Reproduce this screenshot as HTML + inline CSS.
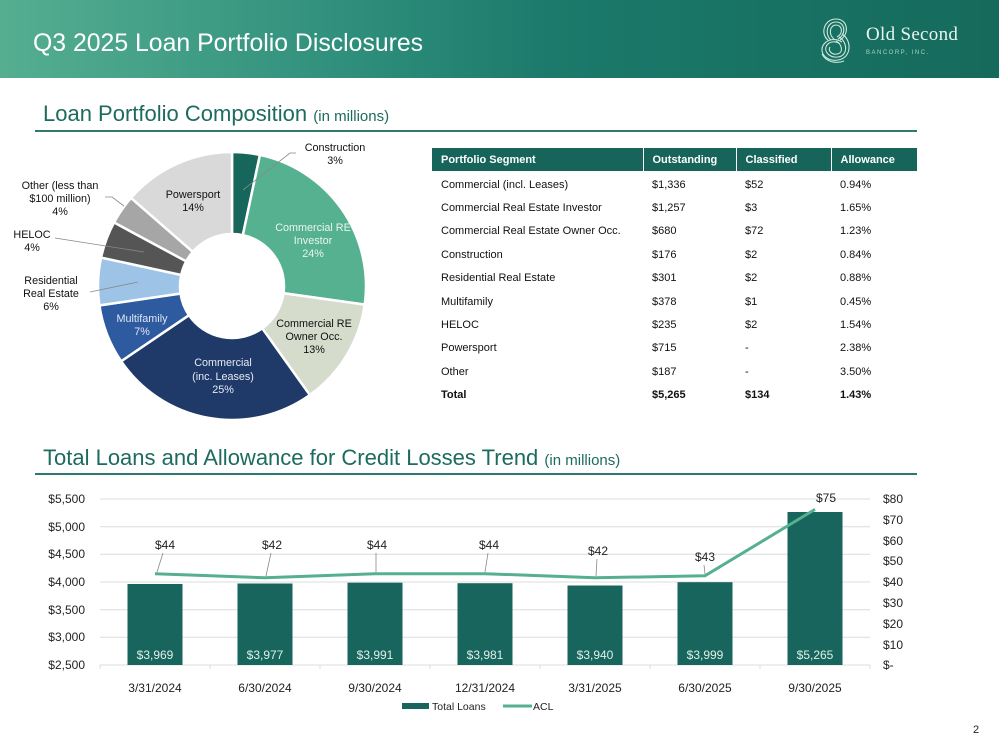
<!DOCTYPE html>
<html><head><meta charset="utf-8"><style>
body{margin:0;width:999px;height:750px;background:#fff;position:relative;overflow:hidden;font-family:"Liberation Sans",Arial,sans-serif}
.hdr{position:absolute;left:0;top:0;width:999px;height:78px;background:linear-gradient(90deg,#55ae90 0%,#2f8f7c 35%,#1b7a6b 55%,#156a5c 100%)}
.hdr h1{position:absolute;left:33px;top:30px;margin:0;font-weight:normal;font-size:24.8px;color:#fff}
.sec{position:absolute;left:43px;font-size:22px;color:#1d6b5e;white-space:nowrap}
.sec small{font-size:15px}
.rule{position:absolute;left:35px;width:882px;height:2px;background:#2f7a70}
table{position:absolute;left:432px;top:148px;width:485px;border-collapse:collapse;font-size:11px;color:#111;table-layout:fixed}
th{background:#17655a;color:#fff;text-align:left;font-weight:bold;height:23px;padding:0 0 0 9px;border-left:1px solid #fff}
th:first-child{border-left:none}
td{height:23.4px;padding:0 0 0 9px}
tr.sp td{height:2px;padding:0}
</style></head><body>
<div class="hdr"><h1>Q3 2025 Loan Portfolio Disclosures</h1>
<svg style="position:absolute;left:812px;top:14px" width="50" height="52" viewBox="0 0 50 52" fill="none" stroke="#cfe8dc" stroke-width="1.1">
<path d="M16 26 C8 20 12 5 24 5 C36 5 38 20 28 26"/>
<path d="M19 26 C12 20 15 8 24 8 C33 8 35 20 26 25"/>
<path d="M22 25 C16 20 18 11 24 11 C30 11 32 19 25 23"/>
<path d="M30 20 C40 26 40 44 26 46 C14 48 6 38 12 30 C16 25 24 24 30 28"/>
<path d="M27 23 C36 28 36 42 26 43 C17 44 11 37 15 31 C18 27 24 27 28 30"/>
<path d="M24 27 C30 30 32 39 25 40 C19 41 16 36 18 33"/>
<path d="M10 40 C14 48 24 50 32 47"/>
</svg>
<div style="position:absolute;left:866px;top:24px;font-family:'Liberation Serif',serif;font-size:19px;color:#e8f4ee;letter-spacing:0.3px">Old Second</div>
<div style="position:absolute;left:866px;top:50px;font-size:6px;color:#a9d3c2;letter-spacing:1.5px">BANCORP, INC.</div>
</div>

<div class="sec" style="top:101px">Loan Portfolio Composition <small>(in millions)</small></div>
<div class="rule" style="top:130px"></div>

<svg id="pie" style="position:absolute;left:0;top:130px" width="420" height="300" viewBox="0 130 420 300" font-size="10.8" text-anchor="middle" fill="#111">
<g id="slices"></g>
<g stroke="#888" stroke-width="0.8" fill="none">
<path d="M243 190 L290 153 L296 153"/><path d="M105 197 L112 197 L124 206"/><path d="M55 238 L144 252"/><path d="M90 292 L138 282"/>
</g>
<text x="335" y="151">Construction</text><text x="335" y="164">3%</text>
<text x="313" y="231" fill="#eaf5ef">Commercial RE</text><text x="313" y="244" fill="#eaf5ef">Investor</text><text x="313" y="257" fill="#eaf5ef">24%</text>
<text x="314" y="327">Commercial RE</text><text x="314" y="340">Owner Occ.</text><text x="314" y="353">13%</text>
<text x="223" y="366" fill="#e6ebf5">Commercial</text><text x="223" y="380" fill="#e6ebf5">(inc. Leases)</text><text x="223" y="393" fill="#e6ebf5">25%</text>
<text x="142" y="322" fill="#dde6f5">Multifamily</text><text x="142" y="335" fill="#dde6f5">7%</text>
<text x="51" y="284">Residential</text><text x="51" y="297">Real Estate</text><text x="51" y="310">6%</text>
<text x="32" y="238">HELOC</text><text x="32" y="251">4%</text>
<text x="60" y="189">Other (less than</text><text x="60" y="202">$100 million)</text><text x="60" y="215">4%</text>
<text x="193" y="198">Powersport</text><text x="193" y="211">14%</text>
</svg>

<table>
<colgroup><col style="width:211px"><col style="width:93px"><col style="width:95px"><col style="width:86px"></colgroup>
<tr><th>Portfolio Segment</th><th>Outstanding</th><th>Classified</th><th>Allowance</th></tr>
<tr class="sp"><td></td><td></td><td></td><td></td></tr>
<tr><td>Commercial (incl. Leases)</td><td>$1,336</td><td>$52</td><td>0.94%</td></tr>
<tr><td>Commercial Real Estate Investor</td><td>$1,257</td><td>$3</td><td>1.65%</td></tr>
<tr><td>Commercial Real Estate Owner Occ.</td><td>$680</td><td>$72</td><td>1.23%</td></tr>
<tr><td>Construction</td><td>$176</td><td>$2</td><td>0.84%</td></tr>
<tr><td>Residential Real Estate</td><td>$301</td><td>$2</td><td>0.88%</td></tr>
<tr><td>Multifamily</td><td>$378</td><td>$1</td><td>0.45%</td></tr>
<tr><td>HELOC</td><td>$235</td><td>$2</td><td>1.54%</td></tr>
<tr><td>Powersport</td><td>$715</td><td>-</td><td>2.38%</td></tr>
<tr><td>Other</td><td>$187</td><td>-</td><td>3.50%</td></tr>
<tr style="font-weight:bold"><td>Total</td><td>$5,265</td><td>$134</td><td>1.43%</td></tr>
</table>

<div class="sec" style="top:445px">Total Loans and Allowance for Credit Losses Trend <small>(in millions)</small></div>
<div class="rule" style="top:473px"></div>

<svg style="position:absolute;left:0;top:480px" width="999" height="270" viewBox="0 480 999 270" font-size="12" fill="#222">
<g stroke="#dcdcdc" stroke-width="1">
<line x1="100" x2="870" y1="499" y2="499"/><line x1="100" x2="870" y1="526.7" y2="526.7"/><line x1="100" x2="870" y1="554.3" y2="554.3"/><line x1="100" x2="870" y1="582" y2="582"/><line x1="100" x2="870" y1="609.7" y2="609.7"/><line x1="100" x2="870" y1="637.3" y2="637.3"/><line x1="100" x2="870" y1="665" y2="665"/>
<line x1="100" x2="100" y1="665" y2="669"/><line x1="210" x2="210" y1="665" y2="669"/><line x1="320" x2="320" y1="665" y2="669"/><line x1="430" x2="430" y1="665" y2="669"/><line x1="540" x2="540" y1="665" y2="669"/><line x1="650" x2="650" y1="665" y2="669"/><line x1="760" x2="760" y1="665" y2="669"/><line x1="870" x2="870" y1="665" y2="669"/>
</g>
<g text-anchor="end"><text x="85" y="503">$5,500</text><text x="85" y="531">$5,000</text><text x="85" y="558">$4,500</text><text x="85" y="586">$4,000</text><text x="85" y="614">$3,500</text><text x="85" y="641">$3,000</text><text x="85" y="669">$2,500</text></g>
<g><text x="883" y="503">$80</text><text x="883" y="524">$70</text><text x="883" y="545">$60</text><text x="883" y="565">$50</text><text x="883" y="586">$40</text><text x="883" y="607">$30</text><text x="883" y="628">$20</text><text x="883" y="649">$10</text><text x="883" y="669">$-</text></g>
<g fill="#17655c">
<rect x="127.5" y="584" width="55" height="81"/><rect x="237.5" y="583.5" width="55" height="81.5"/><rect x="347.5" y="582.7" width="55" height="82.3"/><rect x="457.5" y="583.2" width="55" height="81.8"/><rect x="567.5" y="585.5" width="55" height="79.5"/><rect x="677.5" y="582.2" width="55" height="82.8"/><rect x="787.5" y="512" width="55" height="153"/>
</g>
<g text-anchor="middle" fill="#dff0e8"><text x="155" y="659">$3,969</text><text x="265" y="659">$3,977</text><text x="375" y="659">$3,991</text><text x="485" y="659">$3,981</text><text x="595" y="659">$3,940</text><text x="705" y="659">$3,999</text><text x="815" y="659">$5,265</text></g>
<g text-anchor="middle"><text x="155" y="692">3/31/2024</text><text x="265" y="692">6/30/2024</text><text x="375" y="692">9/30/2024</text><text x="485" y="692">12/31/2024</text><text x="595" y="692">3/31/2025</text><text x="705" y="692">6/30/2025</text><text x="815" y="692">9/30/2025</text></g>
<g stroke="#888" stroke-width="0.8"><line x1="163" y1="553" x2="157" y2="572"/><line x1="271" y1="553" x2="266" y2="576"/><line x1="376" y1="553" x2="376" y2="572"/><line x1="488" y1="553" x2="485" y2="572"/><line x1="597" y1="559" x2="596" y2="576"/><line x1="704" y1="565" x2="705" y2="574"/></g>
<polyline points="155,573.7 265,577.8 375,573.7 485,573.7 595,577.8 705,575.8 815,509.4" fill="none" stroke="#55b08f" stroke-width="3"/>
<g text-anchor="middle"><text x="165" y="549">$44</text><text x="272" y="549">$42</text><text x="377" y="549">$44</text><text x="489" y="549">$44</text><text x="598" y="555">$42</text><text x="705" y="561">$43</text><text x="826" y="502">$75</text></g>
<rect x="402" y="703" width="27" height="6" fill="#17655c"/><text x="432" y="710" font-size="10.5">Total Loans</text>
<line x1="503" x2="532" y1="706" y2="706" stroke="#55b08f" stroke-width="3"/><text x="533" y="710" font-size="10.5">ACL</text>
<text x="973" y="733" font-size="11">2</text>
</svg>
<script>
(function(){var cx=232,cy=286,R=134,r=52;
var d=[[176,"#17665b"],[1257,"#56b191"],[680,"#d5dccc"],[1336,"#1f3a68"],[378,"#2e5a9f"],[301,"#9dc3e6"],[235,"#555555"],[187,"#a6a6a6"],[715,"#d9d9d9"]];
var tot=5265,a=0,g=document.getElementById('slices'),h='';
function p(rad,t){return [cx+rad*Math.sin(t),cy-rad*Math.cos(t)];}
d.forEach(function(s){var a2=a+s[0]/tot*2*Math.PI,l=(a2-a)>Math.PI?1:0;
var A=p(R,a),B=p(R,a2),C=p(r,a2),D=p(r,a);
h+='<path d="M'+A+' A'+R+' '+R+' 0 '+l+' 1 '+B+' L'+C+' A'+r+' '+r+' 0 '+l+' 0 '+D+'Z" fill="'+s[1]+'" stroke="#fff" stroke-width="2.5"/>';a=a2;});
g.innerHTML=h;})();
</script>
</body></html>
